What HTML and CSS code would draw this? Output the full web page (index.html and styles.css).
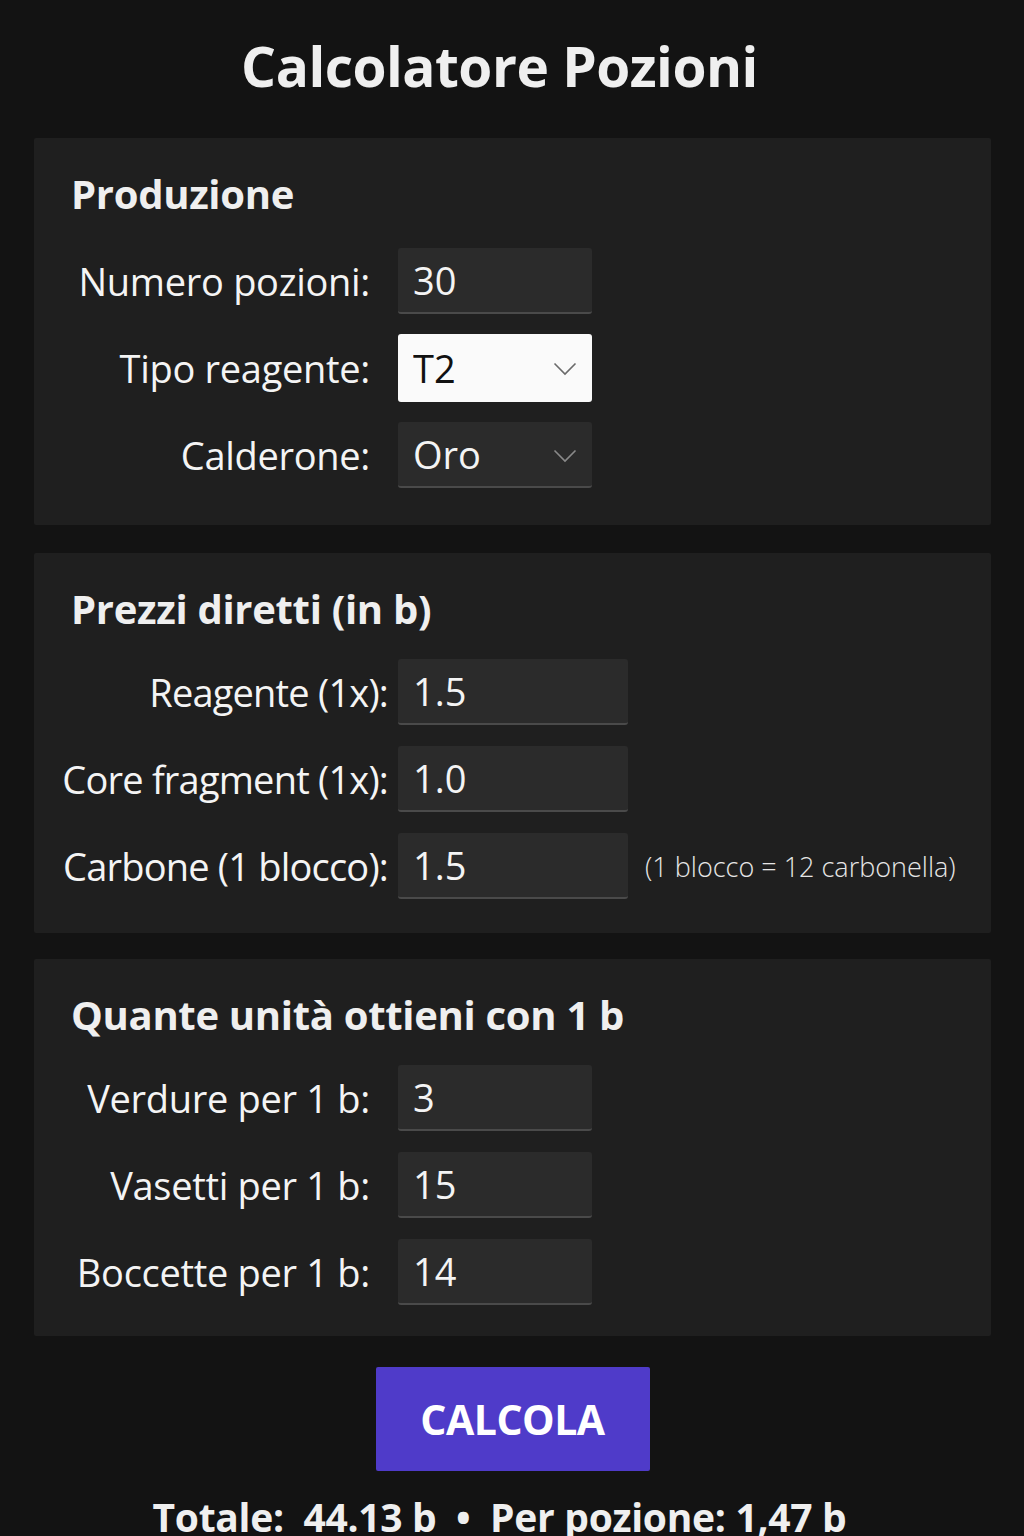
FILE: index.html
```html
<!DOCTYPE html>
<html lang="it">
<head>
<meta charset="utf-8">
<title>Calcolatore Pozioni</title>
<link rel="stylesheet" href="styles.css">
</head>
<body>
<main class="page">
  <h1 class="title">Calcolatore Pozioni</h1>

  <section class="card card-prod">
    <h2 class="card-title">Produzione</h2>
    <div class="rows">
      <label class="row">
        <span class="lbl">Numero pozioni:</span>
        <input class="field" type="text" value="30">
      </label>
      <label class="row">
        <span class="lbl">Tipo reagente:</span>
        <span class="select-wrap select-light">
          <select class="field select"><option>T2</option><option>T1</option><option>T3</option></select>
          <svg class="chev" viewBox="0 0 24 14" width="24" height="14"><path d="M1.5 1.5 L12 12 L22.5 1.5" fill="none" stroke="#6a6a6a" stroke-width="1.6"/></svg>
        </span>
      </label>
      <label class="row">
        <span class="lbl">Calderone:</span>
        <span class="select-wrap">
          <select class="field select"><option>Oro</option><option>Ferro</option></select>
          <svg class="chev" viewBox="0 0 24 14" width="24" height="14"><path d="M1.5 1.5 L12 12 L22.5 1.5" fill="none" stroke="#8a8a8a" stroke-width="1.6"/></svg>
        </span>
      </label>
    </div>
  </section>

  <section class="card card-prices">
    <h2 class="card-title">Prezzi diretti (in b)</h2>
    <div class="rows">
      <label class="row">
        <span class="lbl">Reagente (1x):</span>
        <input class="field field-wide" type="text" value="1.5">
      </label>
      <label class="row">
        <span class="lbl">Core fragment (1x):</span>
        <input class="field field-wide" type="text" value="1.0">
      </label>
      <label class="row">
        <span class="lbl">Carbone (1 blocco):</span>
        <input class="field field-wide" type="text" value="1.5">
        <span class="note">(1 blocco = 12 carbonella)</span>
      </label>
    </div>
  </section>

  <section class="card card-units">
    <h2 class="card-title">Quante unità ottieni con 1 b</h2>
    <div class="rows">
      <label class="row">
        <span class="lbl">Verdure per 1 b:</span>
        <input class="field" type="text" value="3">
      </label>
      <label class="row">
        <span class="lbl">Vasetti per 1 b:</span>
        <input class="field" type="text" value="15">
      </label>
      <label class="row">
        <span class="lbl">Boccette per 1 b:</span>
        <input class="field" type="text" value="14">
      </label>
    </div>
  </section>

  <div class="actions">
    <button class="btn" type="button">CALCOLA</button>
  </div>

  <p class="result">Totale:&nbsp; 44.13 b &nbsp;•&nbsp; Per pozione: 1,47 b</p>
</main>
</body>
</html>
```

FILE: styles.css
```css
* { box-sizing: border-box; }

html, body {
  margin: 0;
  padding: 0;
  background: #131313;
}

body {
  font-family: "Open Sans", "Noto Sans", "DejaVu Sans", sans-serif;
  color: #f2f2f2;
}

.page {
  display: flex;
  flex-direction: column;
  padding: 0 33px 0 34px;
}

.title {
  margin: 26px 0 0;
  padding-right: 26px;
  height: 112px;
  font-size: 55px;
  line-height: 80px;
  font-weight: 700;
  text-align: center;
  color: #efefef;
  letter-spacing: -0.5px;
}

.card {
  background: #1f1f1f;
  border-radius: 2px;
  padding: 30px 0 37px;
}

.card-prices { margin-top: 28px; padding-bottom: 34px; }
.card-units { margin-top: 26px; padding-bottom: 31px; }

.card-title {
  margin: 0 0 28px 37px;
  font-size: 40px;
  line-height: 52px;
  font-weight: 700;
  color: #efefef;
  letter-spacing: -0.3px;
}

.card-prices .card-title { margin-bottom: 24px; }
.card-units .card-title { margin-bottom: 24px; }

.rows {
  display: flex;
  flex-direction: column;
  gap: 21px;
}

.row {
  display: flex;
  align-items: center;
  height: 66px;
}

.lbl {
  display: flex;
  justify-content: flex-end;
  white-space: nowrap;
  flex: none;
  width: 364px;
  padding-right: 28px;
  font-size: 38px;
  color: #f4f4f4;
  letter-spacing: -0.3px;
}

.card-prices .lbl {
  padding-right: 10px;
  letter-spacing: -0.8px;
}

.field {
  width: 194px;
  height: 66px;
  margin: 0;
  padding: 0 0 0 15px;
  border: 0;
  border-bottom: 2px solid #4a4a4a;
  border-radius: 3px;
  background: #2b2b2b;
  color: #f4f4f4;
  font-family: inherit;
  font-size: 38px;
  outline: none;
}

.field-wide { width: 230px; }

.select-wrap {
  position: relative;
  display: block;
  width: 194px;
  height: 66px;
}

.select {
  -webkit-appearance: none;
  appearance: none;
  width: 100%;
}

.select-light .select {
  background: #fafafa;
  color: #111;
  border-bottom: 0;
  height: 68px;
  margin-top: -1px;
}

.chev {
  position: absolute;
  right: 15px;
  top: 27px;
  pointer-events: none;
}

.note {
  margin-left: 17px;
  font-size: 27px;
  font-weight: 300;
  color: #e6e6e6;
  white-space: nowrap;
}

.actions {
  display: flex;
  justify-content: center;
  margin-top: 31px;
}

.btn {
  width: 274px;
  height: 104px;
  border: 0;
  border-radius: 2px;
  background: #4f3bc9;
  color: #ffffff;
  font-family: inherit;
  font-size: 41px;
  font-weight: 700;
  letter-spacing: -0.5px;
}

.result {
  margin: 18px 0 0;
  padding-right: 26px;
  text-align: center;
  font-size: 39px;
  line-height: 56px;
  font-weight: 700;
  color: #efefef;
  letter-spacing: -0.3px;
  white-space: nowrap;
}
```
